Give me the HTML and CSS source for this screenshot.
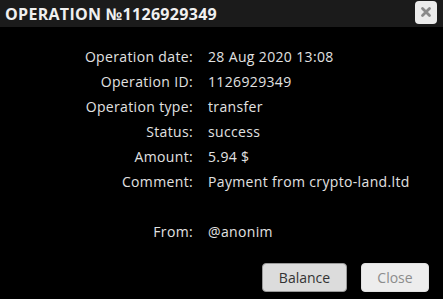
FILE: index.html
```html
<!DOCTYPE html>
<html>
<head>
<meta charset="utf-8">
<link rel="stylesheet" href="styles.css">
</head>
<body>
<div class="dialog">
  <div class="header">
    <div class="title">OPERATION №1126929349</div>
    <button class="close-x" aria-label="close">
      <svg width="12" height="12" viewBox="0 0 12 12"><path d="M2.5 2.5 L9.5 9.5 M9.5 2.5 L2.5 9.5" stroke="#8a8a8a" stroke-width="2.8" stroke-linecap="round"/></svg>
    </button>
  </div>
  <div class="body">
    <div class="details">
      <div class="label">Operation date:</div><div class="value">28 Aug 2020 13:08</div>
      <div class="label">Operation ID:</div><div class="value">1126929349</div>
      <div class="label">Operation type:</div><div class="value">transfer</div>
      <div class="label">Status:</div><div class="value">success</div>
      <div class="label">Amount:</div><div class="value">5.94 $</div>
      <div class="label">Comment:</div><div class="value">Payment from crypto-land.ltd</div>
      <div class="label">&nbsp;</div><div class="value">&nbsp;</div>
      <div class="label">From:</div><div class="value">@anonim</div>
    </div>
    <div class="actions">
      <button class="btn btn-balance">Balance</button>
      <button class="btn btn-close">Close</button>
    </div>
  </div>
</div>
</body>
</html>
```
FILE: styles.css
```css
html, body {
  margin: 0;
  padding: 0;
  background: #000;
}
body {
  width: 443px;
  height: 299px;
  overflow: hidden;
  font-family: "Open Sans", sans-serif;
}
.dialog {
  display: flex;
  flex-direction: column;
  height: 299px;
}
.header {
  height: 27px;
  background: #1b1b1b;
  display: flex;
  align-items: center;
  justify-content: space-between;
  padding: 0 6px 0 5px;
}
.title {
  color: #f0f0f0;
  font-weight: 700;
  font-size: 16px;
  letter-spacing: 0.3px;
}
.close-x {
  width: 22px;
  height: 23px;
  margin-top: -3px;
  border: none;
  border-radius: 4px;
  background: #ececec;
  display: flex;
  align-items: center;
  justify-content: center;
  padding: 0;
}
.body {
  flex: 1;
  display: flex;
  flex-direction: column;
  padding-top: 17px;
}
.details {
  display: grid;
  grid-template-columns: 193px 1fr;
  column-gap: 15px;
  line-height: 25px;
  font-size: 14px;
  letter-spacing: 0.35px;
  color: #e2e2e2;
}
.label {
  text-align: right;
}
.actions {
  display: flex;
  justify-content: flex-end;
  gap: 14px;
  padding: 19px 14px 0 0;
}
.btn {
  height: 29px;
  border-radius: 4px;
  font-family: "Open Sans", sans-serif;
  font-size: 14px;
  padding: 0;
}
.btn-balance {
  width: 85px;
  background: #dcdcdc;
  border: 1px solid #9a9a9a;
  color: #333;
}
.btn-close {
  width: 68px;
  background: #ededed;
  border: 1px solid #e0e0e0;
  color: #8c8c8c;
}
```
